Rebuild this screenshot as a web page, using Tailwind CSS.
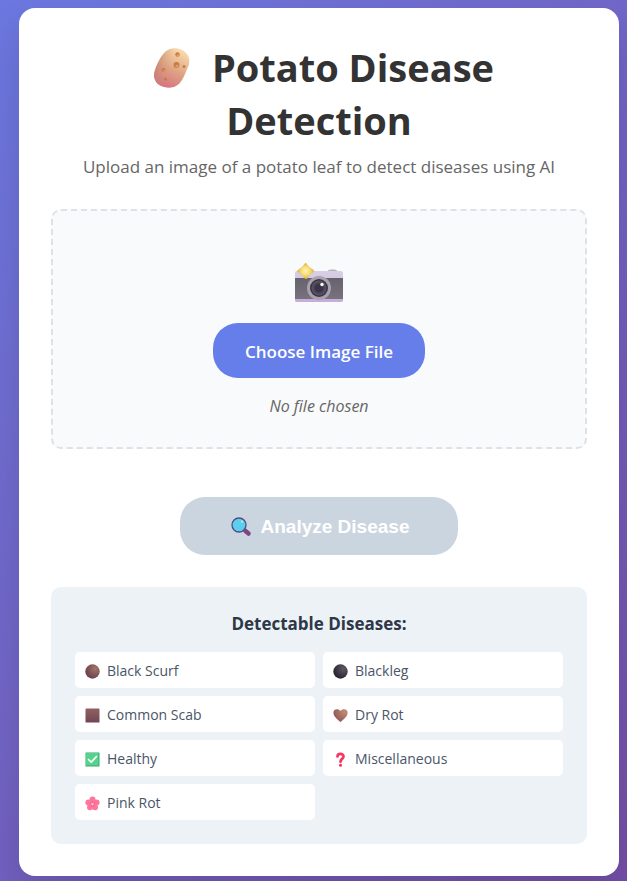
<!DOCTYPE html>
<html lang="en">
<head>
<meta charset="utf-8">
<meta name="viewport" content="width=device-width, initial-scale=1">
<title>Potato Disease Detection</title>
<script src="https://cdn.jsdelivr.net/npm/@tailwindcss/browser@4"></script>
</head>
<body class="min-h-screen bg-linear-135 from-[#6b78e0] to-[#744fa8] pt-2 pr-2 pb-1 pl-[19px] font-['Open_Sans','Noto_Sans',sans-serif]">
<main class="rounded-2xl bg-white p-8 text-center shadow-[0_20px_40px_rgba(0,0,0,0.12)]">
  <header class="pt-px">
    <h1 class="px-8 text-[38px] leading-[53px] font-bold text-[#333]">
      <svg class="mr-[10px] ml-2 inline-block size-10 align-[-6px]" viewBox="0 0 40 40" aria-hidden="true">
        <defs>
          <linearGradient id="potato" x1="0.7" y1="0" x2="0.25" y2="1"><stop stop-color="#fbdcae"/><stop offset=".5" stop-color="#dfa583"/><stop offset="1" stop-color="#d56f80"/></linearGradient>
          <linearGradient id="shade" x1="0" y1=".3" x2="1" y2=".6"><stop stop-color="#a87062" stop-opacity=".55"/><stop offset=".5" stop-color="#dba17f" stop-opacity="0"/></linearGradient>
        </defs>
        <path d="M13 4C17 0 24-1 30 2C37 5 39 13 36 19C34 23 33 27 30 32C26 39 19 41 12 39C4 37 0 30 3 22C5 16 8 9 13 4Z" fill="url(#potato)"/>
        <path d="M13 4C17 0 24-1 30 2C37 5 39 13 36 19C34 23 33 27 30 32C26 39 19 41 12 39C4 37 0 30 3 22C5 16 8 9 13 4Z" fill="url(#shade)"/>
        <g fill="#c77b45"><circle cx="25.500" cy="6.500" r="2.200"/><circle cx="24.500" cy="17" r="2.900"/><circle cx="32" cy="18.500" r="1.500"/><circle cx="11.500" cy="22" r="2"/><circle cx="13.500" cy="31" r="1.600"/></g>
        <g fill="#df9b61"><circle cx="26" cy="7.300" r="1.200"/><circle cx="25" cy="18" r="1.600"/><circle cx="12" cy="22.700" r="1"/></g>
      </svg>
      Potato Disease Detection
    </h1>
    <p class="mt-2 text-[17px] leading-6 text-[#666]">Upload an image of a potato leaf to detect diseases using AI</p>
  </header>

  <section class="mt-[30px] flex flex-col items-center rounded-[10px] border-2 border-dashed border-[#dee2e8] bg-[#f8fafc] px-8 pt-[52px] pb-[29px]">
    <svg class="h-10 w-12" viewBox="0 0 48 40" aria-hidden="true">
      <defs>
        <linearGradient id="top" x1="0" y1="0" x2="0" y2="1"><stop stop-color="#d8cfe3"/><stop offset="1" stop-color="#c9bad8"/></linearGradient>
        <linearGradient id="grip" x1="0" y1="0" x2="0" y2="1"><stop stop-color="#67636e"/><stop offset="1" stop-color="#77727d"/></linearGradient>
        <radialGradient id="glass"><stop stop-color="#665f75"/><stop offset=".5" stop-color="#443c50"/><stop offset="1" stop-color="#5b5566"/></radialGradient>
        <radialGradient id="flash"><stop stop-color="#fff2b8"/><stop offset=".5" stop-color="#f8df7c"/><stop offset="1" stop-color="#dfae35"/></radialGradient>
      </defs>
      <path d="M33 9V8Q33 6.500 36 6.500H39Q42 6.500 42 8V9Z" fill="#b5b3b5"/>
      <rect x="0" y="8" width="48" height="31" rx="2" fill="url(#top)"/>
      <rect x="0" y="15" width="48" height="21" fill="url(#grip)"/>
      <path d="M0 36H48V37Q48 39 46 39H2Q0 39 0 37Z" fill="#c6aed8"/>
      <circle cx="24" cy="25" r="12" fill="#a8a2ae"/>
      <circle cx="24" cy="25" r="9" fill="#3a3343"/>
      <circle cx="24" cy="25" r="7.500" fill="url(#glass)"/>
      <circle cx="24" cy="25" r="4" fill="#3b3347"/>
      <circle cx="27" cy="21.500" r="1.700" fill="#fff"/>
      <path d="M10.500 0Q11.500 0 12.500 2Q14.500 4.500 18 6.500Q20 8 18 9.500Q15 11 13 14.500Q11 17.500 9 14.500Q7 11.500 3.500 9.500Q1 8 3.500 6.500Q7 4.500 9 1.500Q9.800 0 10.500 0Z" fill="url(#flash)"/>
    </svg>
    <label for="file" class="mt-5 cursor-pointer rounded-[25px] bg-[#667eea] px-8 pt-4 pb-[14px] text-[17px] leading-[25px] font-semibold text-white">Choose Image File</label>
    <input id="file" type="file" accept="image/*" class="sr-only">
    <p class="mt-4 text-[16px] leading-6 text-[#666] italic">No file chosen</p>
  </section>

  <button type="button" disabled class="mt-12 inline-flex items-center gap-2 rounded-[25px] bg-[#cbd5e0] px-[49px] pt-[18px] pb-4 font-['Liberation_Sans',Arial,sans-serif] text-[19px] leading-6 font-bold text-white">
    <svg class="h-5 w-6" viewBox="0 0 24 20" aria-hidden="true">
      <path d="M16.500 14L19.500 16.500" stroke="#804682" stroke-width="4.500" stroke-linecap="round"/>
      <circle cx="10" cy="8" r="7" fill="#5dcfee" stroke="#504d80" stroke-width="1.300"/>
      <circle cx="13" cy="4.500" r="1" fill="#c2f3fb"/>
    </svg>
    Analyze Disease
  </button>

  <section class="mt-8 rounded-[10px] bg-[#edf2f7] p-6">
    <h2 class="text-[17px] leading-[26px] font-bold text-[#2d3748]">Detectable Diseases:</h2>
    <ul class="mt-[15px] grid grid-cols-2 gap-2 text-left text-[14px] leading-5 text-[#4a5568]">
      <li class="flex items-center gap-[7px] rounded-[5px] bg-white px-[10px] pt-[9px] pb-[7px]">
        <svg class="size-[15px]" viewBox="0 0 15 15" aria-hidden="true"><defs><radialGradient id="brown" cx=".7" cy=".3" r=".75"><stop stop-color="#a27466"/><stop offset="1" stop-color="#69404f"/></radialGradient></defs><circle cx="7.500" cy="7.500" r="7.200" fill="url(#brown)"/></svg>
        Black Scurf
      </li>
      <li class="flex items-center gap-[7px] rounded-[5px] bg-white px-[10px] pt-[9px] pb-[7px]">
        <svg class="size-[15px]" viewBox="0 0 15 15" aria-hidden="true"><defs><radialGradient id="black" cx=".7" cy=".3" r=".75"><stop stop-color="#5d5867"/><stop offset="1" stop-color="#29222f"/></radialGradient></defs><circle cx="7.500" cy="7.500" r="7.200" fill="url(#black)"/></svg>
        Blackleg
      </li>
      <li class="flex items-center gap-[7px] rounded-[5px] bg-white px-[10px] pt-[9px] pb-[7px]">
        <svg class="size-[15px]" viewBox="0 0 15 15" aria-hidden="true"><defs><linearGradient id="square" x1="0" y1="0" x2="0" y2="1"><stop stop-color="#90615f"/><stop offset="1" stop-color="#714555"/></linearGradient></defs><rect x=".5" y=".5" width="14" height="14" rx=".6" fill="url(#square)"/></svg>
        Common Scab
      </li>
      <li class="flex items-center gap-[7px] rounded-[5px] bg-white px-[10px] pt-[9px] pb-[7px]">
        <svg class="size-[15px]" viewBox="0 0 15 15" aria-hidden="true"><defs><radialGradient id="heart" cx=".8" cy=".2" r=".9"><stop stop-color="#c28b70"/><stop offset="1" stop-color="#8f5556"/></radialGradient></defs><path d="M7.500 3C5.500.400 1.500.700.600 3.500C-.500 7.500 3.500 11 7.500 14C11.500 11 15.500 7.500 14.400 3.500C13.500.700 9.500.400 7.500 3Z" fill="url(#heart)"/></svg>
        Dry Rot
      </li>
      <li class="flex items-center gap-[7px] rounded-[5px] bg-white px-[10px] pt-[9px] pb-[7px]">
        <svg class="size-[15px]" viewBox="0 0 15 15" aria-hidden="true"><rect x=".5" y=".5" width="14" height="14" rx=".6" fill="#3aa76f"/><rect x="1" y="1" width="12.500" height="12.500" fill="#55d38c"/><path d="M3.500 7.500L6.200 10.200L11.500 4.500" fill="none" stroke="#fff" stroke-width="1.700" stroke-linecap="round" stroke-linejoin="round"/></svg>
        Healthy
      </li>
      <li class="flex items-center gap-[7px] rounded-[5px] bg-white px-[10px] pt-[9px] pb-[7px]">
        <svg class="size-[15px]" viewBox="0 0 15 15" aria-hidden="true"><path d="M4.500 4.500C4.500 1.200 10.500 1 10.500 4.500C10.500 7 7.500 6.800 7.500 9.800" fill="none" stroke="#f73564" stroke-width="2.700" stroke-linecap="round"/><circle cx="7.500" cy="13.300" r="1.500" fill="#f52d55"/></svg>
        Miscellaneous
      </li>
      <li class="flex items-center gap-[7px] rounded-[5px] bg-white px-[10px] pt-[9px] pb-[7px]">
        <svg class="size-[15px]" viewBox="0 0 15 15" aria-hidden="true"><g fill="#ff769b"><circle cx="7.500" cy="3.400" r="3"/><circle cx="11.600" cy="6.400" r="3"/><circle cx="10" cy="11.300" r="3"/><circle cx="5" cy="11.300" r="3"/><circle cx="3.400" cy="6.400" r="3"/><circle cx="7.500" cy="8" r="3"/></g><path d="M7.500 5V8L4.800 7M7.500 8L10.200 7M7.500 8L5.800 10.500M7.500 8L9.200 10.500" fill="none" stroke="#ee4f86" stroke-width=".8"/><circle cx="7.500" cy="8" r="1.200" fill="#ffc3d5"/></svg>
        Pink Rot
      </li>
    </ul>
  </section>
</main>
</body>
</html>
